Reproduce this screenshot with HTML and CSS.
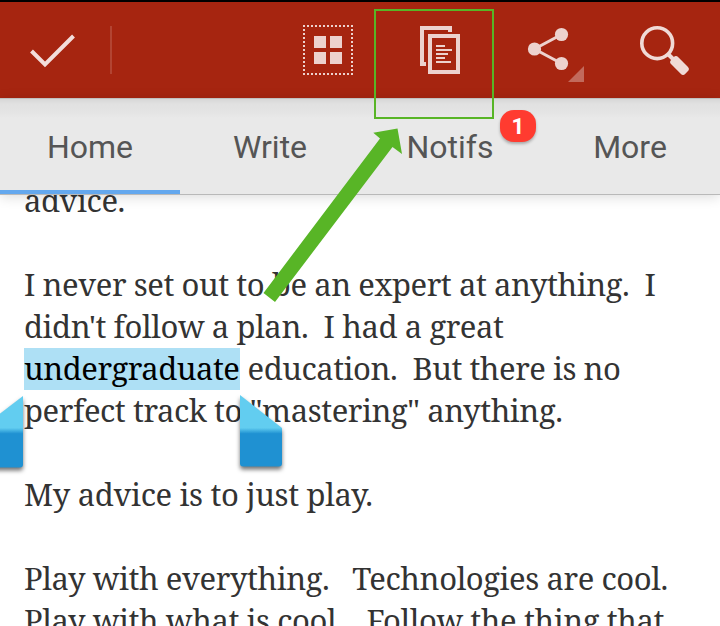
FILE: index.html
```
<!DOCTYPE html>
<html lang="en">
<head>
<meta charset="utf-8">
<title>Reader</title>
<link rel="stylesheet" href="styles.css">
</head>
<body>
<div class="screen">
  <header class="toolbar">
    <svg class="done" width="110" height="96" viewBox="0 2 110 96"><path d="M31.5 51 L45 64.5 L73.5 36" fill="none" stroke="#f3dedb" stroke-width="4"/></svg>
    <span class="divider"></span>
    <svg class="actions" width="440" height="96" viewBox="280 2 440 96">
      <g fill="none" stroke="#edd2ce" stroke-width="2" stroke-dasharray="2 2">
        <path d="M303 26H353M303 74H353M304 29V73M352 29V73"/>
      </g>
      <path d="M314 36h12v12h-12zM330 36h12v12h-12zM314 52h12v12h-12zM330 52h12v12h-12z" fill="#edd2ce"/>
      <g fill="none" stroke="#edd2ce">
        <path d="M450 32V28H422V64H426" stroke-width="4"/>
        <path d="M430 36H458V72H430Z" stroke-width="4"/>
        <path d="M436 46h9M436 50h16M436 54h12M436 58h9M436 62h15" stroke-width="2"/>
      </g>
      <path d="M561.5 34.5 L534.5 49 L561.5 63.5" fill="none" stroke="#edd2ce" stroke-width="3"/>
      <g fill="#edd2ce"><circle cx="561.5" cy="34.5" r="6.6"/><circle cx="534.5" cy="49" r="6.6"/><circle cx="561.5" cy="63.5" r="6.6"/></g>
      <path d="M584 66V82H568Z" fill="#c26a5c"/>
      <circle cx="657.2" cy="43.2" r="15.4" fill="none" stroke="#f0dad6" stroke-width="3.6"/>
      <path d="M668 54L673 59" stroke="#f0dad6" stroke-width="4"/>
      <rect x="-10" y="-5" width="20" height="10" rx="3.3" fill="#f0dad6" transform="translate(679.5 65.5) rotate(45)"/>
    </svg>
  </header>
  <nav class="tabs">
    <div class="tab active"><span>Home</span></div>
    <div class="tab"><span>Write</span></div>
    <div class="tab"><span>Notifs</span><b class="badge">1</b></div>
    <div class="tab"><span>More</span></div>
  </nav>
  <main class="article">
    <p class="l1">advice.</p>
    <p class="l2">I never set out to be an expert at anything.  I</p>
    <p class="l3">didn't follow a plan.  I had a great</p>
    <p class="l4"><mark>undergraduate</mark><span> education.  But there is no</span></p>
    <p class="l5">perfect track to "mastering" anything.</p>
    <p class="l6">My advice is to just play.</p>
    <p class="l7">Play with everything.   Technologies are cool.</p>
    <p class="l8">Play with what is cool.   Follow the thing that</p>
  </main>
  <svg class="overlay" width="720" height="626" viewBox="0 0 720 626">
    <defs>
      <linearGradient id="handle" x1="0" y1="395" x2="0" y2="468" gradientUnits="userSpaceOnUse">
        <stop offset="0" stop-color="#62cdf0"/><stop offset=".45" stop-color="#62cdf0"/>
        <stop offset=".53" stop-color="#1f91d2"/><stop offset="1" stop-color="#1f91d2"/>
      </linearGradient>
    </defs>
    <path class="handle" d="M23 396V464.500Q23 467.500 20 467.500H-20V429Z" fill="url(#handle)"/>
    <path class="handle" d="M240 395L282 428V463.500Q282 466.500 279 466.500H243Q240 466.500 240 463.500Z" fill="url(#handle)"/>
    <rect x="375" y="10" width="118" height="108" fill="none" stroke="#58b526" stroke-width="2"/>
    <path d="M263.500 293L380 138.500L373.300 132.700L397.500 128.500L402 154L392.500 147L275 302Z" fill="#58b526"/>
  </svg>
</div>
</body>
</html>
```
FILE: styles.css
```
body { margin: 0; background: #fff; }
.screen { position: relative; width: 720px; height: 626px; overflow: hidden; display: flex; flex-direction: column; }
.toolbar { box-sizing: border-box; flex: none; height: 98px; border-top: 2px solid #000; background: #a62510; display: flex; align-items: center; }
.divider { width: 2px; height: 48px; background: #b34432; }
.done, .actions { display: block; flex: none; }
.actions { margin-left: auto; }
.tabs { box-sizing: border-box; flex: none; height: 97px; display: grid; grid-template-columns: repeat(4, 1fr); background: linear-gradient(#a9a9a9 0, #d7d7d7 1px, #e1e1e1 6px, #e4e4e4 14px, #e9e9e9 20px); border-bottom: 1px solid #b9b9b9; box-shadow: 0 2px 12px rgba(0,0,0,.14); position: relative; z-index: 1; }
.tab { box-sizing: border-box; position: relative; display: flex; justify-content: center; padding-top: 28px; height: 96px; font: 32px/42px Roboto, sans-serif; color: #555; }
.active { border-bottom: 4px solid #64a8ee; }
.badge { position: absolute; left: 140px; top: 12px; width: 36px; height: 32px; border-radius: 14px; background: #ff3b30; color: #fff; font: bold 22.5px/33px Roboto, sans-serif; text-align: center; box-shadow: 0 2px 3px rgba(0,0,0,.28); }
.article { display: flex; flex-direction: column; margin-top: -16px; padding-left: 24px; font-family: "Noto Serif", "Droid Serif", "DejaVu Serif", serif; font-size: 31px; letter-spacing: -.44px; line-height: 42px; color: #333; }
.article p { flex: none; margin: 0; height: 42px; white-space: pre; }
.article .l1, .article .l5, .article .l6 { margin-bottom: 42px; }
.article .l3, .article .l7, .article .l8 { letter-spacing: -.42px; }
.article .l4 { display: flex; letter-spacing: -.48px; }
.article .l6 { letter-spacing: -.34px; }
mark { width: 216px; height: 42px; margin-top: 1px; line-height: 40px; background: #aee0f5; color: #000; }
.overlay { position: absolute; inset: 0; z-index: 2; }
.handle { filter: drop-shadow(0 3px 2px rgba(0,0,0,.55)); }
```
